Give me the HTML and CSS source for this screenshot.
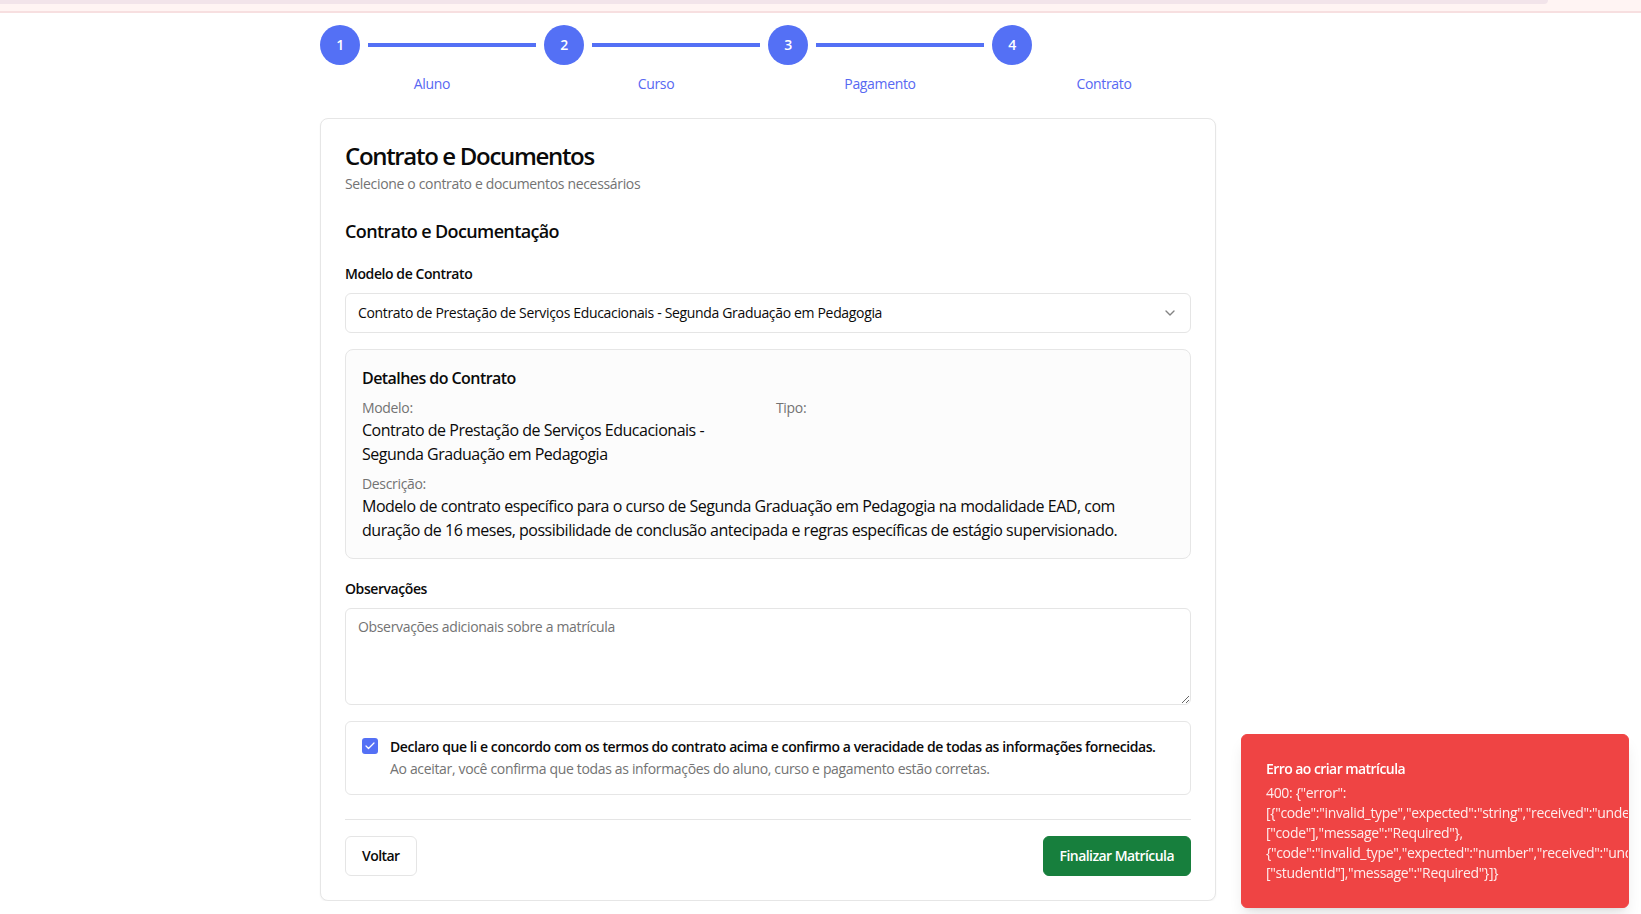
FILE: index.html
```html
<!DOCTYPE html>
<html lang="pt-BR">
<head>
<meta charset="utf-8">
<title>Matrícula - Contrato</title>
<link rel="stylesheet" href="styles.css">
</head>
<body>
<div class="topbar"><div class="topbar-strip"></div></div>
<main class="page">
  <ol class="stepper">
    <li class="step">
      <div class="step-head"><span class="step-circle">1</span><span class="step-line"></span></div>
      <span class="step-label">Aluno</span>
    </li>
    <li class="step">
      <div class="step-head"><span class="step-circle">2</span><span class="step-line"></span></div>
      <span class="step-label">Curso</span>
    </li>
    <li class="step">
      <div class="step-head"><span class="step-circle">3</span><span class="step-line"></span></div>
      <span class="step-label">Pagamento</span>
    </li>
    <li class="step">
      <div class="step-head"><span class="step-circle">4</span></div>
      <span class="step-label">Contrato</span>
    </li>
  </ol>

  <section class="card">
    <header class="card-header">
      <h1 class="card-title">Contrato e Documentos</h1>
      <p class="card-subtitle">Selecione o contrato e documentos necessários</p>
    </header>

    <h2 class="section-title">Contrato e Documentação</h2>

    <div class="field">
      <label class="field-label">Modelo de Contrato</label>
      <button class="select" type="button">
        <span class="select-value">Contrato de Prestação de Serviços Educacionais - Segunda Graduação em Pedagogia</span>
        <svg class="select-icon" width="16" height="16" viewBox="0 0 24 24" fill="none" stroke="currentColor" stroke-width="2" stroke-linecap="round" stroke-linejoin="round"><path d="m6 9 6 6 6-6"/></svg>
      </button>
    </div>

    <div class="details">
      <h3 class="details-title">Detalhes do Contrato</h3>
      <div class="details-grid">
        <div class="details-item">
          <span class="details-label">Modelo:</span>
          <p class="details-value">Contrato de Prestação de Serviços Educacionais - Segunda Graduação em Pedagogia</p>
        </div>
        <div class="details-item">
          <span class="details-label">Tipo:</span>
          <p class="details-value"></p>
        </div>
      </div>
      <div class="details-desc">
        <span class="details-label">Descrição:</span>
        <p class="details-value">Modelo de contrato específico para o curso de Segunda Graduação em Pedagogia na modalidade EAD, com duração de 16 meses, possibilidade de conclusão antecipada e regras específicas de estágio supervisionado.</p>
      </div>
    </div>

    <div class="field field-notes">
      <label class="field-label">Observações</label>
      <textarea class="textarea" placeholder="Observações adicionais sobre a matrícula"></textarea>
    </div>

    <div class="agree">
      <span class="checkbox">
        <svg width="12" height="12" viewBox="0 0 24 24" fill="none" stroke="#fff" stroke-width="2.5" stroke-linecap="round" stroke-linejoin="round"><path d="M20 6 9 17l-5-5"/></svg>
      </span>
      <div class="agree-text">
        <p class="agree-label">Declaro que li e concordo com os termos do contrato acima e confirmo a veracidade de todas as informações fornecidas.</p>
        <p class="agree-hint">Ao aceitar, você confirma que todas as informações do aluno, curso e pagamento estão corretas.</p>
      </div>
    </div>

    <div class="actions">
      <button class="btn btn-outline" type="button">Voltar</button>
      <button class="btn btn-success" type="button">Finalizar Matrícula</button>
    </div>
  </section>
</main>

<div class="toast" role="alert">
  <div class="toast-title">Erro ao criar matrícula</div>
  <div class="toast-desc">400: {"error":[{"code":"invalid_type","expected":"string","received":"undefined","path":["code"],"message":"Required"},{"code":"invalid_type","expected":"number","received":"undefined","path":["studentId"],"message":"Required"}]}</div>
</div>
</body>
</html>
```

FILE: styles.css
```css
* { box-sizing: border-box; }

html, body {
  margin: 0;
  padding: 0;
  background: #ffffff;
}

body {
  font-family: "Open Sans", "Noto Sans", sans-serif;
  color: #0a0a0a;
  font-size: 14px;
  line-height: 20px;
  letter-spacing: -0.024em;
}

p, h1, h2, h3 { margin: 0; }

.topbar {
  height: 13px;
  background: #fff4f3;
  border-bottom: 2px solid #f7dfe0;
}

.topbar-strip {
  width: 1548px;
  height: 4px;
  background: #f2e4ea;
  border-bottom-right-radius: 6px;
}

.page {
  width: 896px;
  margin-left: 320px;
  padding-top: 12px;
}

/* Stepper */
.stepper {
  list-style: none;
  margin: 0;
  padding: 0;
  display: grid;
  grid-template-columns: repeat(4, 1fr);
}

.step {
  display: flex;
  flex-direction: column;
}

.step-head {
  display: flex;
  align-items: center;
  height: 40px;
}

.step-circle {
  width: 40px;
  height: 40px;
  flex: none;
  border-radius: 50%;
  background: #5470f5;
  color: #ffffff;
  font-weight: 600;
  font-size: 14px;
  display: flex;
  align-items: center;
  justify-content: center;
}

.step-line {
  flex: 1;
  height: 4px;
  margin: 0 8px;
  background: #5470f5;
}

.step-label {
  margin-top: 9px;
  text-align: center;
  font-size: 14px;
  line-height: 20px;
  font-weight: 500;
  color: #5868f2;
}

/* Card */
.card {
  margin-top: 24px;
  border: 1px solid #e6e6e6;
  border-radius: 8px;
  padding: 24px;
  background: #ffffff;
  box-shadow: 0 1px 2px rgba(0, 0, 0, 0.05);
}

.card-title {
  font-size: 24px;
  line-height: 26px;
  font-weight: 600;
  letter-spacing: -0.055em;
}

.card-subtitle {
  margin-top: 5px;
  font-size: 14px;
  line-height: 20px;
  color: #737373;
}

.section-title {
  margin-top: 23px;
  font-size: 18px;
  line-height: 28px;
  font-weight: 600;
  letter-spacing: -0.035em;
}

.field {
  margin-top: 22px;
  display: flex;
  flex-direction: column;
}

.field-label {
  font-size: 14px;
  line-height: 14px;
  font-weight: 600;
  letter-spacing: -0.03em;
}

.select {
  margin-top: 12px;
  height: 40px;
  width: 100%;
  border: 1px solid #e5e5e5;
  border-radius: 6px;
  background: #ffffff;
  padding: 0 12px;
  display: flex;
  align-items: center;
  justify-content: space-between;
  font: inherit;
  font-size: 14px;
  letter-spacing: -0.024em;
  color: #0a0a0a;
  text-align: left;
}

.select-icon {
  color: #0a0a0a;
  opacity: 0.5;
  flex: none;
}

/* Details */
.details {
  margin-top: 16px;
  border: 1px solid #e6e6e6;
  border-radius: 8px;
  background: #fcfcfc;
  padding: 16px;
}

.details-title {
  font-size: 16px;
  line-height: 24px;
  font-weight: 600;
  letter-spacing: -0.035em;
}

.details-grid {
  margin-top: 8px;
  display: grid;
  grid-template-columns: 1fr 1fr;
  gap: 16px;
}

.details-label {
  display: block;
  font-size: 14px;
  line-height: 20px;
  color: #737373;
}

.details-value {
  font-size: 16px;
  line-height: 24px;
  letter-spacing: -0.03em;
}

.details-desc {
  margin-top: 8px;
}

/* Notes */
.field-notes {
  margin-top: 23px;
}

.textarea {
  margin-top: 12px;
  height: 97px;
  width: 100%;
  border: 1px solid #e5e5e5;
  border-radius: 6px;
  padding: 8px 12px;
  font: inherit;
  font-size: 14px;
  line-height: 20px;
  letter-spacing: -0.024em;
  color: #0a0a0a;
  background: #ffffff;
}

.textarea::placeholder {
  color: #737373;
}

/* Agreement */
.agree {
  margin-top: 16px;
  border: 1px solid #e6e6e6;
  border-radius: 6px;
  padding: 16px 16px 15px;
  display: flex;
  align-items: flex-start;
  gap: 12px;
}

.checkbox {
  width: 16px;
  height: 16px;
  flex: none;
  border-radius: 3px;
  background: #5470f5;
  display: flex;
  align-items: center;
  justify-content: center;
}

.agree-text {
  padding-top: 2px;
}

.agree-label {
  font-size: 14px;
  line-height: 14px;
  font-weight: 600;
  letter-spacing: -0.03em;
  white-space: nowrap;
}

.agree-hint {
  margin-top: 5px;
  font-size: 14px;
  line-height: 20px;
  color: #737373;
}

/* Actions */
.actions {
  margin-top: 24px;
  border-top: 1px solid #e5e5e5;
  padding-top: 16px;
  display: flex;
  justify-content: space-between;
}

.btn {
  height: 40px;
  padding: 0 16px;
  border-radius: 6px;
  font: inherit;
  font-size: 14px;
  font-weight: 600;
  letter-spacing: -0.04em;
  cursor: pointer;
}

.btn-outline {
  background: #ffffff;
  border: 1px solid #e5e5e5;
  color: #0a0a0a;
}

.btn-success {
  background: #177f3d;
  border: 1px solid #177f3d;
  color: #ffffff;
}

/* Toast */
.toast {
  position: fixed;
  right: 12px;
  bottom: 6px;
  width: 388px;
  padding: 24px;
  border: 1px solid #ef4444;
  border-radius: 6px;
  background: #ef4444;
  color: #ffffff;
  overflow: hidden;
  box-shadow: 0 10px 15px -3px rgba(0, 0, 0, 0.1), 0 4px 6px -4px rgba(0, 0, 0, 0.1);
}

.toast-title {
  font-size: 14px;
  line-height: 20px;
  font-weight: 600;
  letter-spacing: -0.04em;
}

.toast-desc {
  margin-top: 4px;
  font-size: 14px;
  line-height: 20px;
  opacity: 0.9;
}
```
